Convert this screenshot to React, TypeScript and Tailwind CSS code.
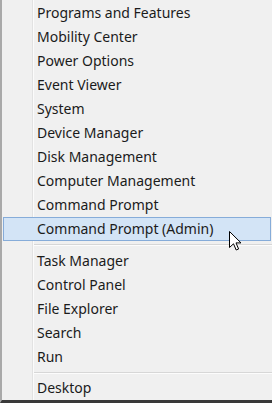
import React from "react";

type Item = { label: string; active?: boolean } | { sep: number };

const items: Item[] = [
  { label: "Programs and Features" },
  { label: "Mobility Center" },
  { label: "Power Options" },
  { label: "Event Viewer" },
  { label: "System" },
  { label: "Device Manager" },
  { label: "Disk Management" },
  { label: "Computer Management" },
  { label: "Command Prompt" },
  { label: "Command Prompt (Admin)", active: true },
  { sep: 1 },
  { label: "Task Manager" },
  { label: "Control Panel" },
  { label: "File Explorer" },
  { label: "Search" },
  { label: "Run" },
  { sep: 2 },
  { label: "Desktop" },
];

function Cursor() {
  return (
    <svg
      className="absolute left-[229px] top-[231px]"
      width="14"
      height="21"
      viewBox="0 0 14 21"
    >
      <path
        d="M0.5 0.5 L0.5 16.5 L4.5 12.8 L7.2 19 L9.6 18 L7 11.9 L12 11.9 Z"
        fill="#ffffff"
        stroke="#000000"
        strokeWidth="1"
        strokeLinejoin="miter"
      />
    </svg>
  );
}

export default function App() {
  return (
    <div
      className="relative w-[272px] h-[403px] bg-[#f0f0f0] overflow-hidden"
      style={{ fontFamily: '"Noto Sans", "Open Sans", sans-serif' }}
    >
      <div className="flex h-full flex-col border-l-2 border-l-[#a9a9a9] border-b-[3px] border-b-[#3a3a3a] pt-[1px]">
        <div className="relative flex flex-1 flex-col">
          <div className="pointer-events-none absolute left-[30px] top-[-1px] bottom-0 w-[2px] flex">
            <div className="w-px bg-[#e2e2e2]" />
            <div className="w-px bg-[#fbfbfb]" />
          </div>
          {items.map((it, i) =>
            "sep" in it ? (
              <div
                key={i}
                className={
                  "flex flex-col justify-center pl-[32px] " +
                  (it.sep === 1 ? "h-[8px]" : "h-[7px]")
                }
              >
                <div className="h-px bg-[#d7d7d7]" />
                <div className="h-px bg-[#fcfcfc]" />
              </div>
            ) : (
              <div
                key={i}
                className={
                  "relative flex h-[24px] items-center text-[14px] text-[#1b1b1b] " +
                  (it.active
                    ? "mx-px border border-[#86acd9] bg-[#d3e4f6] pl-[33px]"
                    : "pl-[35px]")
                }
              >
                <span className="leading-none">{it.label}</span>
              </div>
            )
          )}
        </div>
      </div>
      <Cursor />
    </div>
  );
}
